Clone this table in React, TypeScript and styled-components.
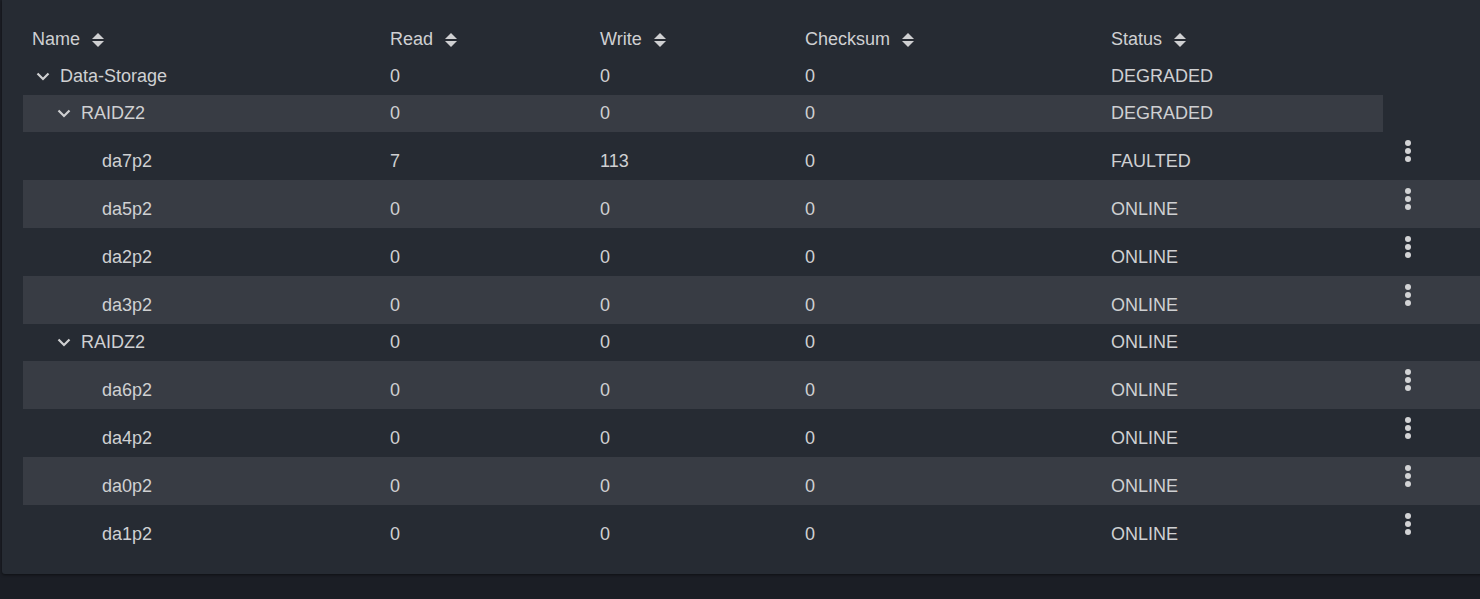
import React from "react";
import styled, { createGlobalStyle } from "styled-components";

const Global = createGlobalStyle`
  html, body { margin: 0; padding: 0; background: #1b1e25; overflow: hidden; }
  body { font-family: "Liberation Sans", Arial, sans-serif; }
`;

const Page = styled.div`
  width: 1480px;
  height: 599px;
  overflow: hidden;
  background: #1b1e25;
`;

const Card = styled.div`
  margin-left: 2px;
  width: 1520px;
  padding: 21px 0 21px 21px;
  background: #262b33;
  border-radius: 0 0 3px 3px;
  box-shadow: 0 1px 3px rgba(0, 0, 0, 0.5);
`;

const COLS = "358px 210px 205px 306px 281px 140px";

const Row = styled.div<{ $h: number; $shade?: boolean; $full?: boolean }>`
  display: grid;
  grid-template-columns: ${COLS};
  height: ${(p) => p.$h}px;
  color: #cfd0d2;
  font-size: 18px;
  background: ${(p) =>
    p.$shade
      ? p.$full
        ? "#383c44"
        : "linear-gradient(to right, #383c44 0 1360px, transparent 1360px)"
      : "transparent"};
`;

const Cell = styled.div<{ $pad?: number; $shift?: number }>`
  display: flex;
  align-items: center;
  padding-left: ${(p) => p.$pad ?? 9}px;
  padding-top: ${(p) => p.$shift ?? 0}px;
  white-space: nowrap;
`;

const HeadCell = styled(Cell)`
  gap: 12px;
`;

const Toggle = styled.span`
  display: inline-flex;
  width: 14px;
  margin-right: 10px;
  align-items: center;
`;

const ActionCell = styled.div`
  display: flex;
  align-items: center;
  padding-left: 22px;
  padding-bottom: 10px;
`;

const SortIcon = () => (
  <svg width="12" height="14" viewBox="0 0 12 14">
    <path d="M6 0 L12 6 L0 6 Z" fill="#cfd0d2" />
    <path d="M0 8 L12 8 L6 14 Z" fill="#cfd0d2" />
  </svg>
);

const Chevron = () => (
  <svg width="14" height="9" viewBox="0 0 14 9">
    <path d="M1.5 1.5 L7 7 L12.5 1.5" fill="none" stroke="#cfd0d2" strokeWidth="2.2" />
  </svg>
);

const Kebab = () => (
  <svg width="6" height="22" viewBox="0 0 6 22">
    <circle cx="3" cy="3" r="3" fill="#d2d3d5" />
    <circle cx="3" cy="11" r="3" fill="#d2d3d5" />
    <circle cx="3" cy="19" r="3" fill="#d2d3d5" />
  </svg>
);

type Node = {
  kind: "pool" | "vdev" | "disk";
  name: string;
  r: string;
  w: string;
  c: string;
  s: string;
  shade: boolean;
};

const rows: Node[] = [
  { kind: "pool", name: "Data-Storage", r: "0", w: "0", c: "0", s: "DEGRADED", shade: false },
  { kind: "vdev", name: "RAIDZ2", r: "0", w: "0", c: "0", s: "DEGRADED", shade: true },
  { kind: "disk", name: "da7p2", r: "7", w: "113", c: "0", s: "FAULTED", shade: false },
  { kind: "disk", name: "da5p2", r: "0", w: "0", c: "0", s: "ONLINE", shade: true },
  { kind: "disk", name: "da2p2", r: "0", w: "0", c: "0", s: "ONLINE", shade: false },
  { kind: "disk", name: "da3p2", r: "0", w: "0", c: "0", s: "ONLINE", shade: true },
  { kind: "vdev", name: "RAIDZ2", r: "0", w: "0", c: "0", s: "ONLINE", shade: false },
  { kind: "disk", name: "da6p2", r: "0", w: "0", c: "0", s: "ONLINE", shade: true },
  { kind: "disk", name: "da4p2", r: "0", w: "0", c: "0", s: "ONLINE", shade: false },
  { kind: "disk", name: "da0p2", r: "0", w: "0", c: "0", s: "ONLINE", shade: true },
  { kind: "disk", name: "da1p2", r: "0", w: "0", c: "0", s: "ONLINE", shade: false },
];

const headers = ["Name", "Read", "Write", "Checksum", "Status"];

export default function App() {
  return (
    <Page>
      <Global />
      <Card>
        <Row $h={37}>
          {headers.map((h) => (
            <HeadCell key={h}>
              {h}
              <SortIcon />
            </HeadCell>
          ))}
        </Row>
        {rows.map((n, i) => {
          const disk = n.kind === "disk";
          const shift = disk ? 10 : 0;
          const namePad = n.kind === "pool" ? 13 : n.kind === "vdev" ? 34 : 79;
          return (
            <Row key={i} $h={disk ? 48 : 37} $shade={n.shade} $full={disk}>
              <Cell $pad={namePad} $shift={shift}>
                {!disk && (
                  <Toggle>
                    <Chevron />
                  </Toggle>
                )}
                {n.name}
              </Cell>
              <Cell $shift={shift}>{n.r}</Cell>
              <Cell $shift={shift}>{n.w}</Cell>
              <Cell $shift={shift}>{n.c}</Cell>
              <Cell $shift={shift}>{n.s}</Cell>
              {disk ? (
                <ActionCell>
                  <Kebab />
                </ActionCell>
              ) : (
                <div />
              )}
            </Row>
          );
        })}
      </Card>
    </Page>
  );
}
